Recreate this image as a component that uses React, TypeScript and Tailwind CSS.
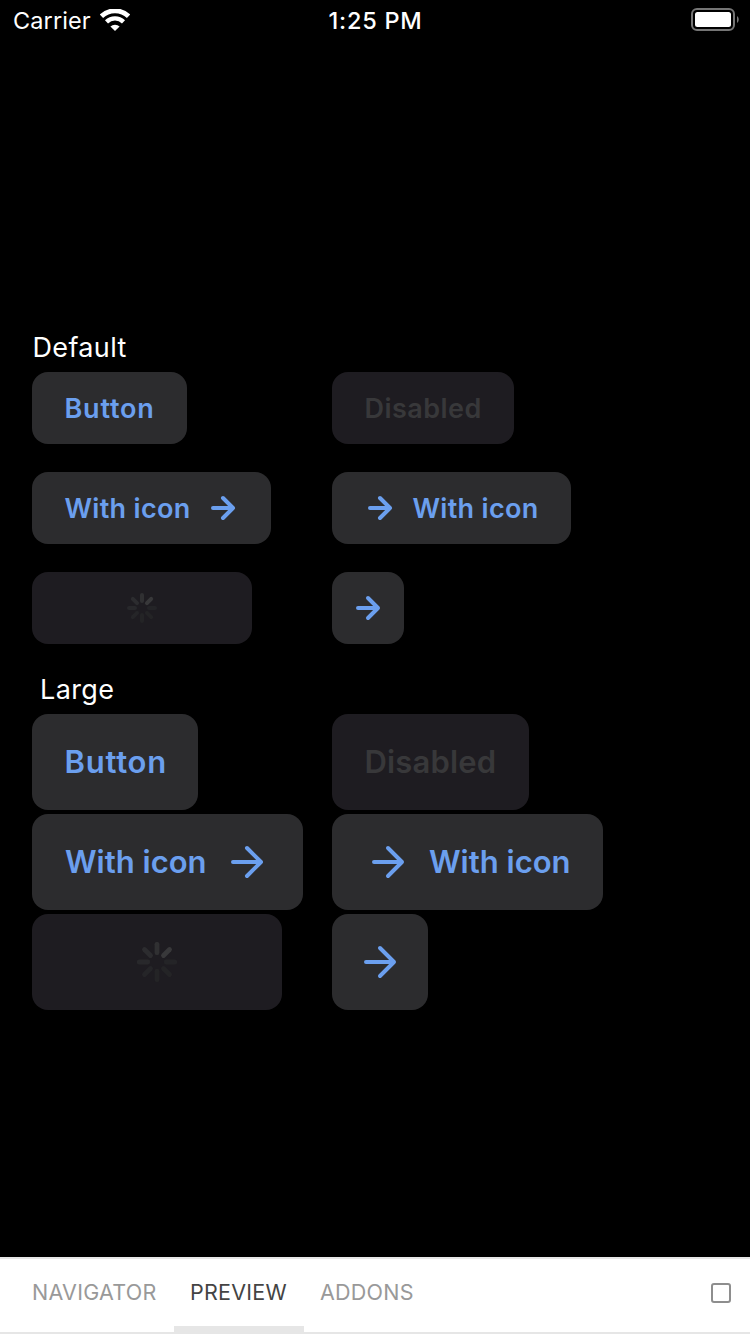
import { ReactNode } from "react";

type Size = "default" | "large";

function Arrow({ size }: { size: Size }) {
  return size === "large" ? (
    <svg className="size-12 shrink-0" viewBox="-8 -8 48 48" fill="none" stroke="currentColor" strokeWidth="4" strokeLinecap="round" strokeLinejoin="round">
      <path d="M2 16H30M16 2L30 16L16 30" />
    </svg>
  ) : (
    <svg className="size-8 shrink-0" viewBox="-4 -4 32 32" fill="none" stroke="currentColor" strokeWidth="4" strokeLinecap="round" strokeLinejoin="round">
      <path d="M2 12H22M12 2L22 12L12 22" />
    </svg>
  );
}

const spokes = ["#303032", "#38383a", "#242427", "#242426", "#242426", "#252528", "#28282b", "#2c2c2f"];

function Spinner({ size }: { size: Size }) {
  const large = size === "large";
  const outer = large ? 17.7 : 13;
  const inner = large ? 9.2 : 7;
  return (
    <svg className={large ? "size-10" : "size-[30px]"} viewBox={large ? "-20 -20 40 40" : "-15 -15 30 30"} strokeWidth={large ? 4.8 : 4} strokeLinecap="round">
      {spokes.map((color, i) => (
        <line key={i} x1="0" x2="0" y1={-outer} y2={-inner} stroke={color} transform={`rotate(${i * 45})`} />
      ))}
    </svg>
  );
}

function Button({ size = "default", disabled, className, children }: { size?: Size; disabled?: boolean; className: string; children: ReactNode }) {
  const tone = disabled ? "bg-[#1e1c21] text-[#38383a]" : "bg-[#2c2c2e] text-[#6b9fee]";
  const scale = size === "large" ? "h-24 text-[31px]" : "h-[72px] text-[27px]";
  return (
    <button disabled={disabled} className={`flex items-center gap-4 rounded-2xl font-semibold whitespace-nowrap ${tone} ${scale} ${className}`}>
      {children}
    </button>
  );
}

function StatusBar() {
  return (
    <header className="grid h-10 grid-cols-3 items-center pr-[11px] pl-[13px] text-[23.5px] leading-9 text-white">
      <div className="flex items-center gap-2">
        <span className="w-[79px] pt-0.5 tracking-[0.1px]">Carrier</span>
        <svg className="h-[22px] w-[30px]" viewBox="0 0 30 22" fill="none" stroke="white">
          <path d="M1.4 7.3A19.5 19.5 0 0 1 28.6 7.3" strokeWidth="4.8" />
          <path d="M6.5 12.8A12.3 12.3 0 0 1 23.5 12.8" strokeWidth="4.4" />
          <path d="M15 22L10.4 17.5A6.6 6.6 0 0 1 19.6 17.5Z" fill="white" stroke="none" />
        </svg>
      </div>
      <span className="pt-0.5 pr-px text-center font-medium tracking-[0.75px]">1:25 PM</span>
      <svg className="mb-px h-[23px] w-12 justify-self-end" viewBox="0 0 48 23">
        <rect x="1" y="1" width="42" height="21" rx="5" fill="none" stroke="#757575" strokeWidth="2" />
        <rect x="4" y="4" width="36" height="15" rx="2.5" fill="white" />
        <path d="M46 8C48.3 9.5 48.3 13.5 46 15Z" fill="#757575" />
      </svg>
    </header>
  );
}

export default function App() {
  return (
    <div className="flex h-[1334px] w-[750px] flex-col bg-black font-['Inter',sans-serif]">
      <StatusBar />
      <main className="flex-1 px-8 pt-[288px]">
        <h2 className="h-11 pl-[0.5px] text-[27px] leading-10 tracking-[0.35px] text-white">Default</h2>
        <div className="grid grid-cols-[300px_1fr] gap-y-7">
          <Button className="w-[155px] pt-0.5 pl-[32.5px] tracking-[0.8px]">Button</Button>
          <Button disabled className="w-[182px] pt-0.5 pl-[32.5px] tracking-[0.45px]">Disabled</Button>
          <Button className="w-[239px] justify-between pr-8 pl-[32.5px] tracking-[0.3px]">
            <span className="pt-0.5">With icon</span>
            <Arrow size="default" />
          </Button>
          <Button className="w-[239px] pl-8 tracking-[0.3px]">
            <Arrow size="default" />
            <span className="pt-0.5 pl-[0.5px]">With icon</span>
          </Button>
          <Button disabled className="w-[220px] justify-center"><Spinner size="default" /></Button>
          <Button className="w-[72px] justify-center"><Arrow size="default" /></Button>
        </div>
        <h2 className="mt-[26px] h-11 pl-2 text-[27px] leading-10 tracking-[0.4px] text-white">Large</h2>
        <div className="grid grid-cols-[300px_1fr] gap-y-1">
          <Button size="large" className="w-[166px] pl-[32.5px] tracking-[0.75px]">Button</Button>
          <Button size="large" disabled className="w-[197px] pl-[32.5px] tracking-[0.15px]">Disabled</Button>
          <Button size="large" className="w-[271px] justify-between pr-8 pl-[33px]">With icon<Arrow size="large" /></Button>
          <Button size="large" className="w-[271px] pl-8">
            <Arrow size="large" />
            <span className="pl-px">With icon</span>
          </Button>
          <Button size="large" disabled className="w-[250px] justify-center"><Spinner size="large" /></Button>
          <Button size="large" className="w-24 justify-center"><Arrow size="large" /></Button>
        </div>
      </main>
      <nav className="flex h-[77px] items-stretch border-y-2 border-[#e6e6e6] bg-white px-4 text-[21.5px] tracking-[0.25px] text-[#999999]">
        <button className="w-[158px] border-b-6 border-transparent pl-4 text-left">NAVIGATOR</button>
        <button className="w-[130px] border-b-6 border-[#e6e6e6] pl-4 text-left text-[#444444]">PREVIEW</button>
        <button className="w-[126px] border-b-6 border-transparent pl-4 text-left">ADDONS</button>
        <span className="mt-6 mr-[3px] ml-auto size-5 rounded-[3px] border-2 border-[#8e8e8e]" />
      </nav>
    </div>
  );
}
